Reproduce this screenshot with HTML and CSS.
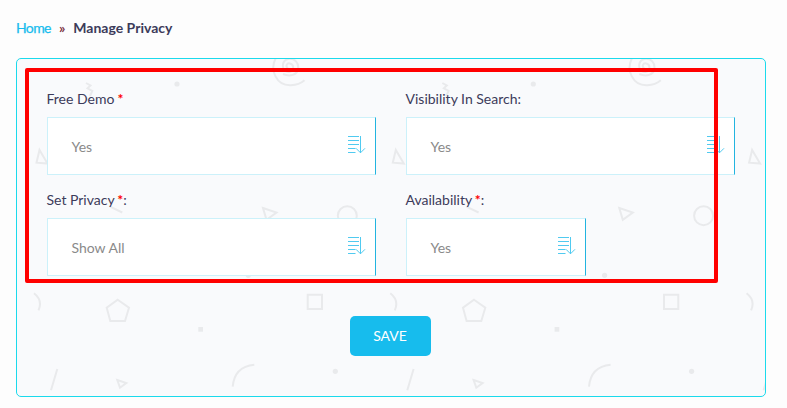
FILE: index.html
```
<!DOCTYPE html>
<html lang="en">
<head>
<meta charset="utf-8">
<title>Manage Privacy</title>
<link rel="stylesheet" href="styles.css">
</head>
<body>
<svg class="defs" aria-hidden="true">
  <symbol id="sort" viewBox="0 0 18 20">
    <path d="M0 1.500h11M0 5.500h11M0 9.500h11M0 13.500h7.500M0 17.500h7.500M12.500 1v17M8 13.300l4.500 4.500 4.500-4.500"/>
  </symbol>
</svg>
<nav class="breadcrumb"><a href="#">Home</a><span class="sep">»</span><strong>Manage Privacy</strong></nav>
<main class="panel">
  <svg class="doodles" viewBox="17 59 748 337" aria-hidden="true">
    <g id="tile">
      <path d="M86 83l4.500 2.500-3 2.800 4.800 2.700-2.300 5"/>
      <path d="M288 68.500c-3-2-1-6 2-5 5 1.500 3.500 8-1 8.500-8 0-8-11-1-13 7-1 11 4 10 10-1 6-8 8-15 5M277 56c-9 14 0 30 14 29.300 6-.3 10-2 13.500-5"/>
      <path d="M39.500 150l-3 12.700 11 .8zM110 206.700l12.300 5.800M263 208l13.500 4.500-10 7.300zM34 293.300q9 7 4.500 17M307.700 294.700h14.300v14.300h-14.300zM117.700 299.700l11.300 8-4 13.300h-14.700l-3.600-13.300zM57.300 369l-6.300 21.300M117.300 380l9 3-6.300 4.700zM254.300 364.700q-20 2-21.600 22"/>
      <circle cx="347.300" cy="215.700" r="9.500"/>
      <g class="solid"><circle cx="177" cy="84" r="2.600"/><circle cx="248.300" cy="275.300" r="2.600"/><circle cx="335.300" cy="371.300" r="2.600"/><path d="M198.300 327h4.700v4.700h-4.700z"/></g>
    </g>
    <use href="#tile" x="356.300"/>
    <use href="#tile" x="712.600"/>
  </svg>
  <form class="form">
    <div class="grid">
      <div class="field">
        <span class="label">Free Demo <i>*</i></span>
        <div class="select">Yes<svg class="icon"><use href="#sort"/></svg></div>
      </div>
      <div class="field">
        <span class="label">Visibility In Search:</span>
        <div class="select">Yes<svg class="icon"><use href="#sort"/></svg></div>
      </div>
      <div class="field">
        <span class="label">Set Privacy <i>*</i>:</span>
        <div class="select">Show All<svg class="icon"><use href="#sort"/></svg></div>
      </div>
      <div class="field">
        <span class="label">Availability <i>*</i>:</span>
        <div class="select short">Yes<svg class="icon"><use href="#sort"/></svg></div>
      </div>
    </div>
    <button class="save" type="button">SAVE</button>
  </form>
  <div class="highlight"></div>
</main>
</body>
</html>
```

FILE: styles.css
```
* { box-sizing: border-box; }
body {
  margin: 0;
  padding: 18px 21px 0 16px;
  background: #fdfdfd;
  color: #3c3b5a;
  font: 14px/20px Lato, sans-serif;
}
.defs { display: none; }
.breadcrumb { display: flex; height: 40px; }
.breadcrumb a { color: #17bced; text-decoration: none; letter-spacing: -0.6px; -webkit-text-stroke: 0.25px; }
.breadcrumb .sep { margin: 0 8px; color: #7b3040; font-weight: 700; }
.breadcrumb strong { font-weight: 700; }
.panel {
  position: relative;
  width: 750px;
  height: 339px;
  border: 1px solid #1bdaec;
  border-radius: 5px;
  background: #f9fafc;
}
.doodles {
  position: absolute;
  inset: 0;
  width: 748px;
  height: 337px;
  fill: none;
  stroke: #e9eaec;
  stroke-width: 2;
}
.doodles .solid { fill: #e9eaec; stroke: none; }
.form {
  position: relative;
  display: flex;
  flex-direction: column;
  align-items: center;
  padding: 30px 31px 0 30px;
}
.grid {
  display: grid;
  grid-template-columns: 329px 329px;
  column-gap: 30px;
  row-gap: 15px;
  align-self: flex-start;
}
.label { display: block; height: 28px; margin-left: -0.5px; }
.label i { color: #f00; font-style: normal; font-weight: 700; margin-left: -0.6px; }
.select {
  display: flex;
  align-items: center;
  justify-content: space-between;
  height: 58px;
  padding: 1px 9px 0 23.5px;
  border: 1px solid #ccf1fa;
  border-right-color: #22b4e0;
  background: #fff;
  color: #8a8a8a;
}
.select.short { width: 180px; }
.icon {
  width: 18px;
  height: 20px;
  margin-top: -3px;
  fill: none;
  stroke: #50caf0;
}
.save {
  width: 81px;
  height: 40px;
  margin: 40px 0 0 -1px;
  padding: 0;
  border: 0;
  border-radius: 5px;
  background: #17bced;
  color: #fff;
  font: 14px/20px Lato, sans-serif;
}
.highlight {
  position: absolute;
  left: 8px;
  top: 9px;
  width: 693px;
  height: 215px;
  border: 4px solid #f00;
  border-radius: 2px;
}
```
